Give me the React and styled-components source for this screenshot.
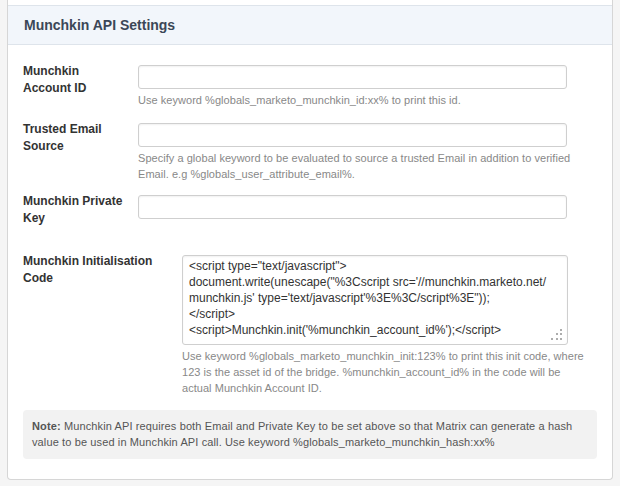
import React from 'react';
import styled, { createGlobalStyle } from 'styled-components';

const GlobalStyle = createGlobalStyle`
    body {
        margin: 0;
        background: #f5f5f5;
        font-family: "Liberation Sans", Arial, sans-serif;
        font-size: 12px;
        color: #333;
    }
`;

const Panel = styled.div`
    margin: 0 7px;
    padding-top: 5px;
    background: #fff;
    border: 1px solid #d6d6d6;
    border-top: none;
    border-radius: 0 0 4px 4px;
`;

const Header = styled.div`
    height: 38px;
    display: flex;
    align-items: center;
    padding: 0 16px;
    background: #f2f6fb;
    border-top: 1px solid #dee4eb;
    border-bottom: 1px solid #dee4eb;

    h2 {
        margin: 0;
        font-size: 14px;
        font-weight: bold;
        color: #3b4757;
    }
`;

const Body = styled.div`
    padding: 18px 15px 20px;
`;

const FieldRow = styled.div`
    display: grid;
    grid-template-columns: ${p => p.$labelWidth}px 1fr;
    margin-top: ${p => p.$gap || 0}px;
`;

const Label = styled.label`
    font-weight: bold;
    line-height: 17px;
    color: #333;
    padding-right: 12px;
`;

const Field = styled.div`
    display: flex;
    flex-direction: column;
    padding-top: 2px;
`;

const TextInput = styled.input`
    box-sizing: border-box;
    width: 429px;
    height: 24px;
    margin: 0;
    border: 1px solid #cfcfcf;
    border-radius: 3px;
    box-shadow: inset 0 1px 2px rgba(0, 0, 0, 0.06);
    background: #fff;
`;

const CodeWrap = styled.div`
    position: relative;
    width: 386px;
`;

const CodeArea = styled.textarea`
    display: block;
    box-sizing: border-box;
    width: 386px;
    height: 90px;
    margin: 0;
    padding: 2px 6px;
    border: 1px solid #cfcfcf;
    border-radius: 3px;
    box-shadow: inset 0 1px 2px rgba(0, 0, 0, 0.06);
    font-family: "Liberation Sans", Arial, sans-serif;
    font-size: 12px;
    line-height: 16px;
    color: #333;
    white-space: pre;
    overflow: hidden;
    resize: none;
`;

const Grip = styled.svg`
    position: absolute;
    right: 6px;
    bottom: 5px;
`;

const Help = styled.div`
    margin-top: 3px;
    font-size: 11px;
    letter-spacing: 0.04px;
    line-height: 16px;
    color: #888;
`;

const Note = styled.div`
    margin-top: 14px;
    padding: 8px 10px 9px 9px;
    background: #f2f2f2;
    border-radius: 4px;
    font-size: 11px;
    letter-spacing: 0.12px;
    line-height: 16px;
    color: #555;

    b {
        color: #555;
    }
`;

const code = `<script type="text/javascript">
document.write(unescape("%3Cscript src='//munchkin.marketo.net/
munchkin.js' type='text/javascript'%3E%3C/script%3E"));
</script>
<script>Munchkin.init('%munchkin_account_id%');</script>`;

const App = () => (
    <>
        <GlobalStyle />
        <Panel>
            <Header>
                <h2>Munchkin API Settings</h2>
            </Header>
            <Body>
                <FieldRow $labelWidth={115}>
                    <Label>Munchkin Account ID</Label>
                    <Field>
                        <TextInput type="text" />
                        <Help>Use keyword %globals_marketo_munchkin_id:xx% to print this id.</Help>
                    </Field>
                </FieldRow>
                <FieldRow $labelWidth={115} $gap={13}>
                    <Label>Trusted Email Source</Label>
                    <Field>
                        <TextInput type="text" />
                        <Help>
                            Specify a global keyword to be evaluated to source a trusted Email in addition to verified
                            <br />
                            Email. e.g %globals_user_attribute_email%.
                        </Help>
                    </Field>
                </FieldRow>
                <FieldRow $labelWidth={115} $gap={11}>
                    <Label>Munchkin Private Key</Label>
                    <Field>
                        <TextInput type="text" />
                    </Field>
                </FieldRow>
                <FieldRow $labelWidth={159} $gap={26}>
                    <Label>Munchkin Initialisation Code</Label>
                    <Field>
                        <CodeWrap>
                            <CodeArea defaultValue={code} wrap="off" spellCheck={false} />
                            <Grip width="11" height="11" viewBox="0 0 11 11">
                                <g fill="#adadad">
                                    <rect x="9" y="0" width="2" height="2" />
                                    <rect x="5" y="4" width="2" height="2" />
                                    <rect x="9" y="4" width="2" height="2" />
                                    <rect x="0" y="9" width="2" height="2" />
                                    <rect x="5" y="9" width="2" height="2" />
                                    <rect x="9" y="9" width="2" height="2" />
                                </g>
                            </Grip>
                        </CodeWrap>
                        <Help>
                            Use keyword %globals_marketo_munchkin_init:123% to print this init code, where
                            <br />
                            123 is the asset id of the bridge. %munchkin_account_id% in the code will be
                            <br />
                            actual Munchkin Account ID.
                        </Help>
                    </Field>
                </FieldRow>
                <Note>
                    <b>Note:</b> Munchkin API requires both Email and Private Key to be set above so that Matrix can
                    generate a hash
                    <br />
                    value to be used in Munchkin API call. Use keyword %globals_marketo_munchkin_hash:xx%
                </Note>
            </Body>
        </Panel>
    </>
);

export default App;
